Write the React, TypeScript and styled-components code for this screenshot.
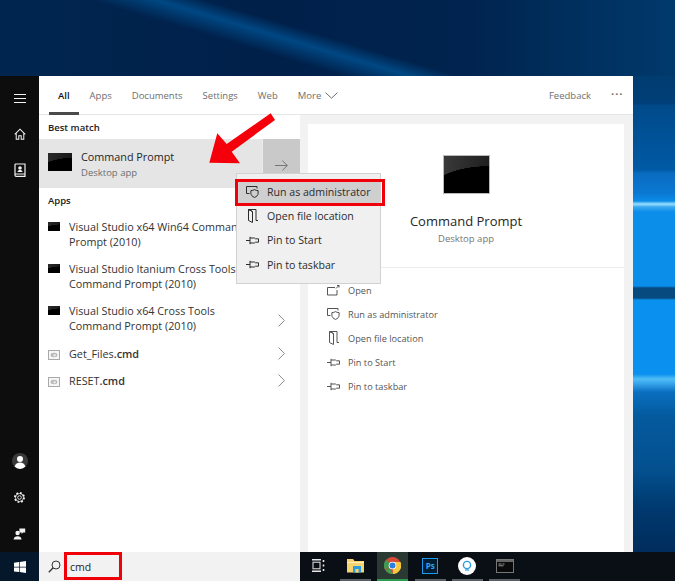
import React, { ReactNode } from "react";
import styled, { createGlobalStyle } from "styled-components";

const GlobalStyle = createGlobalStyle`
  html, body {
    margin: 0;
    padding: 0;
    background: #00234d;
  }
  * {
    box-sizing: border-box;
  }
`;

const PageStyled = styled.div`
  position: relative;
  width: 675px;
  height: 581px;
  overflow: hidden;
  display: flex;
  flex-direction: column;
  font-family: "Open Sans", "Noto Sans", sans-serif;
  color: #2b2b2b;
`;
const DesktopTopStyled = styled.div`
  height: 76px;
  flex: none;
  background:
    linear-gradient(196.7deg, transparent 135px, rgba(0, 84, 150, 0.75) 149px, transparent 168px),
    linear-gradient(90deg, #00264f 0%, #00204a 40%, #00244f 70%, #003a6c 100%);
`;
const MainRowStyled = styled.div`
  height: 476px;
  flex: none;
  display: flex;
`;
const RailStyled = styled.div`
  width: 39px;
  flex: none;
  background: #0d0d0d;
  color: #f2f2f2;
  display: flex;
  flex-direction: column;
  align-items: center;
  padding: 4px 0 1px;
`;
const RailButtonStyled = styled.div<{ $bottom?: boolean }>`
  height: 36px;
  width: 100%;
  display: flex;
  align-items: center;
  justify-content: center;
  margin-top: ${(p) => (p.$bottom ? "auto" : "0")};
`;
const PanelStyled = styled.div`
  width: 594px;
  flex: none;
  background: #f2f2f2;
  display: flex;
  flex-direction: column;
`;
const WallpaperStripStyled = styled.div`
  flex: 1;
  background: linear-gradient(
    180deg,
    #003c70 0,
    #003f78 27px,
    #004a8a 30px,
    #005aa5 94px,
    #0a6cc0 97px,
    #0a78d2 117px,
    #0a8ce8 125px,
    #9adfff 128px,
    #3aa8f0 131px,
    #0a8eea 136px,
    #0a8eea 210px,
    #064a80 212px,
    #064a80 222px,
    #0a90ee 224px,
    #0a90ee 298px,
    #50bdf5 303px,
    #3aa8ee 307px,
    #0a6fc0 316px,
    #045a9e 340px,
    #03508f 394px,
    #003a70 430px,
    #002c5c 476px
  );
`;
const TabBarStyled = styled.div`
  height: 39px;
  flex: none;
  background: #fff;
  border-bottom: 1px solid #e6e6e6;
  display: flex;
  align-items: stretch;
  padding: 0 10px;
  font-size: 9.5px;
`;
const TabStyled = styled.div<{ $active?: boolean }>`
  display: flex;
  align-items: center;
  gap: 4px;
  padding: 2px 9px 0;
  margin-right: 2px;
  color: ${(p) => (p.$active ? "#111" : "#6e6e6e")};
  font-weight: ${(p) => (p.$active ? 600 : 400)};
  border-bottom: 3px solid ${(p) => (p.$active ? "#4a4a4a" : "transparent")};
  margin-bottom: -1px;
`;
const TabBarEndStyled = styled.div`
  margin-left: auto;
  display: flex;
  align-items: center;
  gap: 20px;
  color: #6e6e6e;
  padding-top: 1px;
`;
const MoreDotsStyled = styled.span`
  width: 12px;
  font-size: 11px;
  font-weight: 700;
  letter-spacing: 1px;
  line-height: 10px;
  margin-top: -4px;
  white-space: nowrap;
`;
const ColumnsStyled = styled.div`
  flex: 1;
  display: flex;
  min-height: 0;
`;
const ResultsStyled = styled.div`
  width: 261px;
  flex: none;
  background: #fff;
  display: flex;
  flex-direction: column;
`;
const SectionLabelStyled = styled.div`
  height: 24px;
  padding: 0 9px;
  display: flex;
  align-items: center;
  font-size: 9.5px;
  font-weight: 600;
  color: #222;
`;
const BestMatchStyled = styled.div`
  height: 49px;
  flex: none;
  display: flex;
  background: #e5e5e5;
`;
const BestMatchMainStyled = styled.div`
  flex: 1;
  display: flex;
  align-items: center;
  gap: 9px;
  padding-left: 9px;
`;
const BestMatchTextStyled = styled.div`
  padding-top: 2px;
`;
const BestMatchArrowStyled = styled.div`
  width: 38px;
  flex: none;
  background: #c9c9c9;
  border-left: 1px solid #ececec;
  padding-top: 3px;
  display: flex;
  align-items: center;
  justify-content: center;
  color: #757575;
`;
const BestMatchTitleStyled = styled.div`
  font-size: 10.8px;
  line-height: 15px;
  color: #262626;
`;
const BestMatchSubStyled = styled.div`
  font-size: 9.5px;
  line-height: 15px;
  margin-top: 1px;
  color: #6e6e6e;
`;
const ConsoleIconStyled = styled.div<{ $size: "small" | "medium" | "large" }>`
  flex: none;
  width: ${(p) => ({ small: 12, medium: 24, large: 47 }[p.$size])}px;
  height: ${(p) => ({ small: 9, medium: 18, large: 39 }[p.$size])}px;
  margin-top: ${(p) => (p.$size === "medium" ? "-3px" : "0")};
  background:
    radial-gradient(ellipse 140% 80% at 100% 107%, #000 99%, transparent 100%),
    linear-gradient(100deg, ${(p) => (p.$size === "large" ? "#3a3a3a, #1c1c1c" : "#2a2a2a, #161616")});
  border: ${(p) => (p.$size === "large" ? "1.5px solid #b9b9b9" : "none")};
`;
const AppListStyled = styled.div`
  padding-top: 7px;
`;
const AppRowStyled = styled.div<{ $tall?: boolean }>`
  height: ${(p) => (p.$tall ? 42 : 27)}px;
  padding: 0 15px ${(p) => (p.$tall ? 8 : 10)}px 9px;
  display: flex;
  align-items: ${(p) => (p.$tall ? "flex-start" : "center")};
  gap: 9px;
`;
const AppIconSlotStyled = styled.div<{ $tall?: boolean }>`
  width: 12px;
  flex: none;
  margin-top: ${(p) => (p.$tall ? "3px" : "0")};
`;
const AppNameStyled = styled.div`
  flex: 1;
  font-size: 10.8px;
  line-height: 15px;
  color: #333;
  white-space: pre-line;
  overflow: hidden;
  b {
    font-weight: 600;
  }
`;
const ChevronSlotStyled = styled.div`
  flex: none;
  align-self: center;
  display: flex;
  color: #8a8a8a;
`;
const PreviewPaneStyled = styled.div`
  flex: 1;
  padding: 9px 9px 0 8px;
  display: flex;
`;
const PreviewCardStyled = styled.div`
  flex: 1;
  background: #fff;
  display: flex;
  flex-direction: column;
`;
const PreviewHeadStyled = styled.div`
  height: 144px;
  flex: none;
  border-bottom: 1px solid #ececec;
  display: flex;
  flex-direction: column;
  align-items: center;
  padding-top: 31px;
`;
const PreviewTitleStyled = styled.div`
  font-size: 13px;
  line-height: 18px;
  margin-top: 18px;
  color: #262626;
`;
const PreviewSubStyled = styled.div`
  font-size: 9.5px;
  line-height: 14px;
  margin-top: 2px;
  color: #757575;
`;
const ActionListStyled = styled.div`
  padding: 10px 0 0 19px;
`;
const ActionRowStyled = styled.div`
  height: 24.2px;
  display: flex;
  align-items: center;
  gap: 8px;
  font-size: 9.2px;
  color: #555;
`;
const ContextMenuStyled = styled.div`
  position: absolute;
  left: 236px;
  top: 173px;
  width: 145px;
  height: 111px;
  background: #f0f0f0;
  border: 1px solid #d2d2d2;
  padding-top: 6px;
`;
const MenuRowStyled = styled.div<{ $selected?: boolean }>`
  height: 24.2px;
  display: flex;
  align-items: center;
  gap: 8px;
  padding-left: 9px;
  font-size: 10.6px;
  color: #2b2b2b;
  background: ${(p) => (p.$selected ? "#cfcfcf" : "transparent")};
`;
const RedBoxStyled = styled.div<{ $left: number; $top: number; $width: number; $height: number }>`
  position: absolute;
  left: ${(p) => p.$left}px;
  top: ${(p) => p.$top}px;
  width: ${(p) => p.$width}px;
  height: ${(p) => p.$height}px;
  border: 3px solid #f00008;
  pointer-events: none;
`;
const ArrowOverlayStyled = styled.svg`
  position: absolute;
  left: 205px;
  top: 110px;
`;
const TaskbarStyled = styled.div`
  height: 29px;
  flex: none;
  display: flex;
  background: #0a0f15;
`;
const StartButtonStyled = styled.div`
  width: 39px;
  flex: none;
  background: #04172b;
  display: flex;
  align-items: center;
  justify-content: center;
`;
const SearchBoxStyled = styled.div`
  width: 261px;
  flex: none;
  background: #f2f2f2;
  display: flex;
  align-items: center;
  gap: 9px;
  padding-left: 9px;
  font-size: 10.5px;
  color: #222;
`;
const TrayStyled = styled.div`
  flex: 1;
  display: flex;
  align-items: stretch;
`;
const TraySlotStyled = styled.div`
  width: 37.2px;
  display: flex;
  justify-content: center;
`;
const TrayButtonStyled = styled.div<{ $state?: "active" | "running" }>`
  width: 31px;
  display: flex;
  align-items: center;
  justify-content: center;
  background: ${(p) => (p.$state === "active" ? "#2a3a33" : "transparent")};
  border-bottom: 2px solid
    ${(p) => (p.$state === "active" ? "#2f9a52" : p.$state === "running" ? "#5a5f66" : "transparent")};
`;
const PsBadgeStyled = styled.div`
  width: 16px;
  height: 16px;
  background: #001d34;
  border: 1.5px solid #1b9cf0;
  color: #2ba9f5;
  font-size: 8px;
  font-weight: 700;
  display: flex;
  align-items: center;
  justify-content: center;
`;

const Hamburger = () => (
  <svg width="12" height="9" viewBox="0 0 12 9" stroke="currentColor" strokeWidth="1">
    <path d="M0 .5h12M0 4.5h12M0 8.5h12" />
  </svg>
);
const HomeIcon = () => (
  <svg width="12" height="12" viewBox="0 0 13 13" fill="none" stroke="currentColor" strokeWidth="1.1">
    <path d="M.8 6.8 6.5 1.2l5.7 5.6M2.4 5.6v6.6h2.8V8.4h2.6v3.8h2.8V5.6" />
  </svg>
);
const NotebookIcon = () => (
  <svg width="12" height="14" viewBox="0 0 12 14" fill="none" stroke="currentColor" strokeWidth="1.2">
    <path d="M1 1h10v10H2.2C1.4 11 1 11.6 1 12.2S1.4 13.4 2.2 13.4H11V11M1 1v11" />
    <circle cx="6" cy="5" r="1.8" fill="currentColor" stroke="none" />
    <path d="M3.4 9c.4-1.6 1.4-2 2.6-2s2.2.4 2.6 2" fill="currentColor" stroke="none" />
  </svg>
);
const UserIcon = () => (
  <svg width="16" height="16" viewBox="0 0 16 16">
    <circle cx="8" cy="8" r="8" fill="#3a3a3a" />
    <circle cx="8" cy="6" r="3" fill="#fff" />
    <path d="M2.6 13.6C3.4 10.8 5.4 9.6 8 9.6s4.6 1.2 5.4 4A8 8 0 0 1 8 16a8 8 0 0 1-5.4-2.4z" fill="#fff" />
  </svg>
);
const GearIcon = () => (
  <svg width="13" height="13" viewBox="0 0 13 13" fill="none" stroke="currentColor">
    <circle cx="6.5" cy="6.5" r="4.6" strokeWidth="1.8" strokeDasharray="1.8 1.8" />
    <circle cx="6.5" cy="6.5" r="4" strokeWidth=".8" />
    <circle cx="6.5" cy="6.5" r="1.8" strokeWidth=".9" />
  </svg>
);
const FeedbackPersonIcon = () => (
  <svg width="13" height="13" viewBox="0 0 13 13" fill="currentColor">
    <circle cx="4.6" cy="6" r="2.2" />
    <path d="M.6 12.6c.3-2.4 1.8-3.4 4-3.4s3.7 1 4 3.4z" />
    <path d="M6.4 1.4h5.8v4.2H10L8.6 7V5.6H6.4z" />
  </svg>
);
const WindowsLogo = () => (
  <svg width="12" height="12" viewBox="0 0 12 12" fill="#fff">
    <path d="M0 1.7 5 1v4.7H0zM5.7.9 12 0v5.7H5.7zM0 6.4h5v4.7l-5-.7zM5.7 6.4H12V12l-6.3-.9z" />
  </svg>
);
const SearchIcon = () => (
  <svg width="13" height="13" viewBox="0 0 13 13" fill="none" stroke="#333" strokeWidth="1">
    <circle cx="8" cy="5" r="4" />
    <path d="M5.2 7.8.8 12.2" strokeWidth="1.3" />
  </svg>
);
const ChevronRight = () => (
  <svg width="7" height="13" viewBox="0 0 7 13" fill="none" stroke="currentColor" strokeWidth="1">
    <path d="m.6.6 5.8 5.9L.6 12.4" />
  </svg>
);
const ChevronDown = () => (
  <svg width="13" height="7" viewBox="0 0 13 7" fill="none" stroke="currentColor" strokeWidth="1">
    <path d="m.5.6 6 5.6 6-5.6" />
  </svg>
);
const ArrowRight = () => (
  <svg width="13" height="11" viewBox="0 0 13 11" fill="none" stroke="currentColor" strokeWidth="1">
    <path d="M0 5.5h12.2M7.4.7l5 4.8-5 4.8" />
  </svg>
);
const ScriptIcon = () => (
  <svg width="12" height="10" viewBox="0 0 12 10">
    <rect x=".5" y=".5" width="11" height="9" fill="#f6f6f6" stroke="#a9a9a9" />
    <ellipse cx="6" cy="5" rx="3.4" ry="2.2" fill="#b9b9b9" />
    <circle cx="6.6" cy="5.2" r="1.2" fill="#e6e6e6" />
  </svg>
);
const OpenIcon = () => (
  <svg width="13" height="11" viewBox="0 0 13 11" fill="none" stroke="currentColor" strokeWidth="1">
    <path d="M8 2.5H.5v7.5h9.5V5" />
    <path d="m9 3.5 3-3M10 .5h2v2" />
  </svg>
);
const AdminIcon = () => (
  <svg width="13" height="12" viewBox="0 0 13 12" fill="none" stroke="currentColor" strokeWidth="1">
    <path d="M3.5 7.5H.5v-7h10.5v2" />
    <path d="M8.5 3.6c1 .7 2.2 1 3.6 1v2.6c0 2-1.4 3.4-3.6 4.2-2.2-.8-3.6-2.2-3.6-4.2V4.6c1.4 0 2.6-.3 3.6-1z" />
  </svg>
);
const FolderDocIcon = () => (
  <svg width="13" height="14" viewBox="0 0 13 14" fill="none" stroke="currentColor" strokeWidth="1">
    <path d="M2.5.5h7.5v11h2M2.5.5v11l4 2v-11zM2.5.5l4 2" />
  </svg>
);
const PinIcon = () => (
  <svg width="13" height="9" viewBox="0 0 13 9" fill="none" stroke="currentColor" strokeWidth="1">
    <path d="M0 4.5h4M4 .8v7.4M4 2h4.5l1 .8h3v3.4h-3l-1 .8H4" />
  </svg>
);
const TaskViewIcon = () => (
  <svg width="13" height="13" viewBox="0 0 13 13" fill="none" stroke="#e8e8e8" strokeWidth="1">
    <path d="M0 .8h9M0 12.2h9" strokeWidth="1.4" />
    <rect x="1" y="3.2" width="7" height="6.6" />
    <path d="M11.5 1v2M11.5 5.5v2M11.5 10v2" strokeWidth="1.6" />
  </svg>
);
const FolderIcon = () => (
  <svg width="17" height="15" viewBox="0 0 17 15">
    <path d="M0 1h6l1.5 2H17v11.5H0z" fill="#f5d36f" />
    <path d="M0 4h17v1H0z" fill="#fff0b8" />
    <rect x="6" y="8" width="8" height="6.5" fill="#2a9ce0" />
    <rect x="8.4" y="11" width="3.2" height="3.5" fill="#f5d36f" />
  </svg>
);
const ChromeIcon = () => (
  <svg width="17" height="17" viewBox="0 0 34 34">
    <circle cx="17" cy="17" r="17" fill="#d64a38" />
    <path d="M17 17 1.6 24.5A17 17 0 0 1 4 6z" fill="#3f9a52" />
    <path d="M17 10h16a17 17 0 0 1-15 24z" fill="#f6c83e" />
    <path d="M3 26.6 10.8 21 18 34a17 17 0 0 1-15-7.4z" fill="#3f9a52" />
    <circle cx="17" cy="17" r="7.6" fill="#fff" />
    <circle cx="17" cy="17" r="6" fill="#2a7fe0" />
  </svg>
);
const BulbIcon = () => (
  <svg width="18" height="18" viewBox="0 0 18 18" fill="none">
    <circle cx="9" cy="9" r="9" fill="#fff" />
    <circle cx="9" cy="8" r="3.6" stroke="#2a9ce0" strokeWidth="1.4" />
    <path d="M7 13h4" stroke="#2a9ce0" strokeWidth="1.2" />
  </svg>
);
const TerminalIcon = () => (
  <svg width="18" height="14" viewBox="0 0 18 14">
    <rect x=".5" y=".5" width="17" height="13" fill="#0a0a0a" stroke="#777" />
    <path d="M1 1h16v2H1z" fill="#666" />
    <path d="M2.5 5h3M6.5 5h2M2.5 6.8h5" stroke="#bbb" strokeWidth=".8" />
  </svg>
);

const Action = ({ icon, label }: { icon: ReactNode; label: string }) => (
  <ActionRowStyled>
    {icon}
    {label}
  </ActionRowStyled>
);
const MenuItem = ({ icon, label, selected }: { icon: ReactNode; label: string; selected?: boolean }) => (
  <MenuRowStyled $selected={selected}>
    {icon}
    {label}
  </MenuRowStyled>
);
const AppRow = ({ icon, children, chevron, tall }: { icon: ReactNode; children: ReactNode; chevron?: boolean; tall?: boolean }) => (
  <AppRowStyled $tall={tall}>
    <AppIconSlotStyled $tall={tall}>{icon}</AppIconSlotStyled>
    <AppNameStyled>{children}</AppNameStyled>
    {chevron && (
      <ChevronSlotStyled>
        <ChevronRight />
      </ChevronSlotStyled>
    )}
  </AppRowStyled>
);
const TrayItem = ({ state, children }: { state?: "active" | "running"; children: ReactNode }) => (
  <TraySlotStyled>
    <TrayButtonStyled $state={state}>{children}</TrayButtonStyled>
  </TraySlotStyled>
);

const App = () => (
  <PageStyled>
    <GlobalStyle />
    <DesktopTopStyled />
    <MainRowStyled>
      <RailStyled>
        <RailButtonStyled><Hamburger /></RailButtonStyled>
        <RailButtonStyled><HomeIcon /></RailButtonStyled>
        <RailButtonStyled><NotebookIcon /></RailButtonStyled>
        <RailButtonStyled $bottom><UserIcon /></RailButtonStyled>
        <RailButtonStyled><GearIcon /></RailButtonStyled>
        <RailButtonStyled><FeedbackPersonIcon /></RailButtonStyled>
      </RailStyled>
      <PanelStyled>
        <TabBarStyled>
          <TabStyled $active>All</TabStyled>
          <TabStyled>Apps</TabStyled>
          <TabStyled>Documents</TabStyled>
          <TabStyled>Settings</TabStyled>
          <TabStyled>Web</TabStyled>
          <TabStyled>More <ChevronDown /></TabStyled>
          <TabBarEndStyled>
            <span>Feedback</span>
            <MoreDotsStyled>···</MoreDotsStyled>
          </TabBarEndStyled>
        </TabBarStyled>
        <ColumnsStyled>
          <ResultsStyled>
            <SectionLabelStyled>Best match</SectionLabelStyled>
            <BestMatchStyled>
              <BestMatchMainStyled>
                <ConsoleIconStyled $size="medium" />
                <BestMatchTextStyled>
                  <BestMatchTitleStyled>Command Prompt</BestMatchTitleStyled>
                  <BestMatchSubStyled>Desktop app</BestMatchSubStyled>
                </BestMatchTextStyled>
              </BestMatchMainStyled>
              <BestMatchArrowStyled><ArrowRight /></BestMatchArrowStyled>
            </BestMatchStyled>
            <SectionLabelStyled>Apps</SectionLabelStyled>
            <AppListStyled>
              <AppRow tall icon={<ConsoleIconStyled $size="small" />}>{"Visual Studio x64 Win64 Command\nPrompt (2010)"}</AppRow>
              <AppRow tall icon={<ConsoleIconStyled $size="small" />}>{"Visual Studio Itanium Cross Tools\nCommand Prompt (2010)"}</AppRow>
              <AppRow tall chevron icon={<ConsoleIconStyled $size="small" />}>{"Visual Studio x64 Cross Tools\nCommand Prompt (2010)"}</AppRow>
              <AppRow chevron icon={<ScriptIcon />}>Get_Files<b>.cmd</b></AppRow>
              <AppRow chevron icon={<ScriptIcon />}>RESET<b>.cmd</b></AppRow>
            </AppListStyled>
          </ResultsStyled>
          <PreviewPaneStyled>
            <PreviewCardStyled>
              <PreviewHeadStyled>
                <ConsoleIconStyled $size="large" />
                <PreviewTitleStyled>Command Prompt</PreviewTitleStyled>
                <PreviewSubStyled>Desktop app</PreviewSubStyled>
              </PreviewHeadStyled>
              <ActionListStyled>
                <Action icon={<OpenIcon />} label="Open" />
                <Action icon={<AdminIcon />} label="Run as administrator" />
                <Action icon={<FolderDocIcon />} label="Open file location" />
                <Action icon={<PinIcon />} label="Pin to Start" />
                <Action icon={<PinIcon />} label="Pin to taskbar" />
              </ActionListStyled>
            </PreviewCardStyled>
          </PreviewPaneStyled>
        </ColumnsStyled>
      </PanelStyled>
      <WallpaperStripStyled />
    </MainRowStyled>
    <TaskbarStyled>
      <StartButtonStyled><WindowsLogo /></StartButtonStyled>
      <SearchBoxStyled>
        <SearchIcon />
        cmd
      </SearchBoxStyled>
      <TrayStyled>
        <TrayItem><TaskViewIcon /></TrayItem>
        <TrayItem state="running"><FolderIcon /></TrayItem>
        <TrayItem state="active"><ChromeIcon /></TrayItem>
        <TrayItem state="running"><PsBadgeStyled>Ps</PsBadgeStyled></TrayItem>
        <TrayItem state="running"><BulbIcon /></TrayItem>
        <TrayItem state="running"><TerminalIcon /></TrayItem>
      </TrayStyled>
    </TaskbarStyled>
    <ContextMenuStyled>
      <MenuItem selected icon={<AdminIcon />} label="Run as administrator" />
      <MenuItem icon={<FolderDocIcon />} label="Open file location" />
      <MenuItem icon={<PinIcon />} label="Pin to Start" />
      <MenuItem icon={<PinIcon />} label="Pin to taskbar" />
    </ContextMenuStyled>
    <RedBoxStyled $left={235} $top={179} $width={150} $height={27} />
    <RedBoxStyled $left={64} $top={552} $width={58} $height={28} />
    <ArrowOverlayStyled width="72" height="56" viewBox="0 0 72 56">
      <path d="M65.7 3.3 70 10 26.7 41.7 35 53.3 4.3 52.7 12.3 23.3 21.7 34z" fill="#f5000a" />
    </ArrowOverlayStyled>
  </PageStyled>
);

export default App;
